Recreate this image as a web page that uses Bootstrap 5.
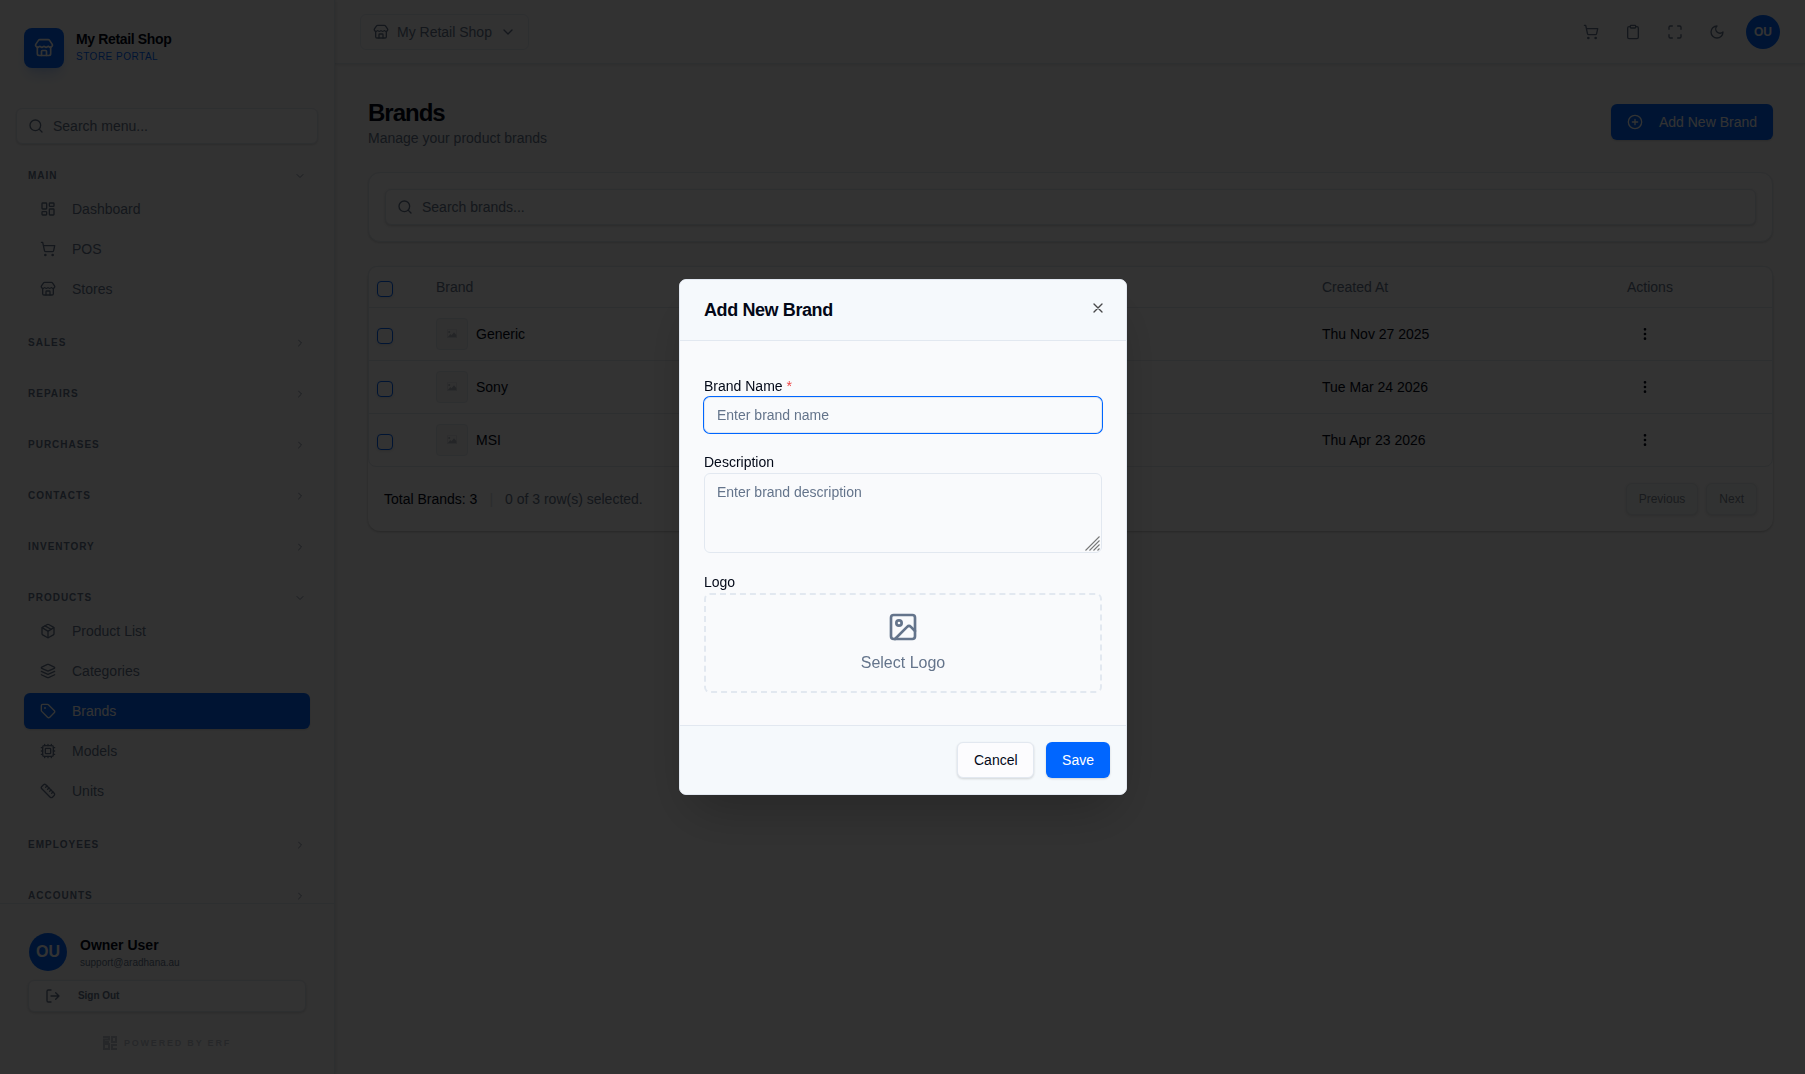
<!DOCTYPE html>
<html lang="en">
<head>
<meta charset="utf-8">
<meta name="viewport" content="width=device-width, initial-scale=1">
<title>Brands - My Retail Shop</title>
<link href="https://cdn.jsdelivr.net/npm/bootstrap@5.3.0/dist/css/bootstrap.min.css" rel="stylesheet">
<style>
:root{--brand:#0066ff;--line:#e2e8f0;--ink:#020817;--soft:#64748b}
body{font-family:"Liberation Sans",Arial,sans-serif;font-size:14px;line-height:20px;color:var(--ink);background:#fafafa;height:1074px;overflow:hidden}
.ico{width:16px;height:16px;fill:none;stroke:currentColor;stroke-width:2;stroke-linecap:round;stroke-linejoin:round;flex:none;display:block}
.soft{color:var(--soft)}
.blue{background:var(--brand);color:#fff}
.lift{box-shadow:0 1px 2px rgba(0,0,0,.08),0 1px 3px rgba(0,0,0,.08)}
.side{width:335px;flex:none;background:#fbfbfb;border-right:1px solid var(--line);box-shadow:1px 0 3px rgba(0,0,0,.1);height:1074px;z-index:2}
.side-brand{padding-top:28px;gap:12px}
.side-search{margin-top:40px}
.logo-tile{width:40px;height:40px;border-radius:8px;box-shadow:0 10px 15px -3px rgba(0,102,255,.2),0 4px 6px -4px rgba(0,102,255,.2)}
.logo-tile .ico{width:20px;height:20px}
.shop-name{font-size:14px;line-height:20px;font-weight:700;letter-spacing:-.35px}
.portal{font-size:10px;line-height:15px;color:var(--brand);letter-spacing:.5px}
.field{height:36px;border:1px solid var(--line);border-radius:6px;background:#fcfcfc;padding:0 11px;gap:9px;color:var(--soft)}
.menu{padding:16px 24px 0;gap:20px;overflow:hidden;flex:1 1 0;min-height:0}
.menu section{flex:none}
.menu-head{height:31px;font-size:10px;font-weight:700;letter-spacing:1px;color:var(--soft);padding:0 4px}
.menu-head .ico{width:12px;height:12px;opacity:.75}
.menu-item{height:36px;border-radius:6px;padding:0 16px;gap:16px;color:var(--soft);text-decoration:none}
.menu-item.on{background:var(--brand);color:#fff}
.side-foot{height:171px;border-top:1px solid var(--line);padding:16px 16px 0}
.user-box{background:#f8f8f8;border-radius:12px;padding:12px}
.disc{border-radius:50%;font-weight:700}
.disc-lg{width:38px;height:38px;font-size:16px;margin:1px}
.disc-sm{width:34px;height:34px;font-size:12px;margin-left:-5px}
.mail{font-size:10px;line-height:15px}
.signout{height:32px;border:1px solid var(--line);border-radius:6px;font-size:10px;font-weight:700;padding:0 16px;gap:17px;background:#fcfcfc;letter-spacing:-.05px}
.powered{font-size:9px;font-weight:700;letter-spacing:1.8px;color:var(--soft);opacity:.4;gap:7px;margin-top:9px}
.powered svg{width:14px;height:14px}
.top{height:64px;border-bottom:1px solid var(--line);box-shadow:0 1px 3px rgba(0,0,0,.1);padding:0 25px;background:#fafafa}
.top-tools{gap:26px}
.shop-pick{height:36px;border:1px solid var(--line);border-radius:6px;padding:0 12px;gap:8px}
.page{padding:32px 32px 0 33px}
.page-head{height:52px}
h1{font-size:24px;line-height:32px;font-weight:700;letter-spacing:-1px;padding-top:1px;height:32px}
.main-btn{height:36px;border-radius:6px;padding:0 16px;gap:16px;border:0}
.panel{background:#fcfcfc;border-radius:12px;border:1px solid var(--line)}
.grid-box{border-radius:12px;background:#fcfcfc;box-shadow:0 1px 3px rgba(0,0,0,.15),0 1px 2px rgba(0,0,0,.1)}
.grid-wrap{border:1px solid var(--line);border-radius:8px;height:201px;overflow:hidden}
.grid-wrap table{table-layout:fixed;width:100%;margin:0;border-collapse:separate;border-spacing:0}
.col-tick{width:59px}.col-date{width:305px}.col-act{width:153px}
.grid-wrap th{height:41px;font-weight:400;color:var(--soft);border-bottom:1px solid var(--line);padding:0 8px}
.grid-wrap td{height:53px;border-bottom:1px solid var(--line);padding:0 8px;vertical-align:middle}
.grid-wrap tr:last-child td{border-bottom:0;height:52px}
.tick{width:16px;height:16px;border:1px solid var(--brand);border-radius:4px;display:block;box-shadow:0 1px 2px rgba(0,0,0,.1);margin-top:4px}
.thumb{width:32px;height:32px;border:1px solid var(--line);border-radius:4px;background:#f4f4f4}
.thumb svg{width:12px;height:12px;fill:#b4bac3}
.kebab{margin-left:10px}
.bar{margin:0 12px}
.pg{height:32px;font-size:12px;border:1px solid #dbe4e8;border-radius:6px;padding:0 12px;background:#f2f9f5;opacity:.7;color:#475569}
.modal{padding-left:1px}
.modal-backdrop{opacity:.8;width:100%;height:100%}
.modal-dialog{max-width:448px;margin-top:0;margin-bottom:0;min-height:1074px}
.modal-content{border:1px solid var(--line);border-radius:7px;background:#f9fafc;box-shadow:0 25px 50px -12px rgba(0,0,0,.25);overflow:hidden;color:var(--ink)}
.modal-header{height:61px;padding:0 20px 0 24px;background:#f5f9fc;border-bottom:1px solid var(--line);border-radius:0}
.modal-title{font-size:18px;line-height:28px;font-weight:700;letter-spacing:-.4px}
.modal-body{padding:36px 24px 32px;gap:20px}
.modal-body label{line-height:18px;height:20px;display:block}
.form-control{font-size:14px;line-height:20px;border-color:var(--line);border-radius:6px;background:#f9fafc;padding:7px 12px}
.form-control::placeholder{color:var(--soft)}
.name-in{height:36px;box-shadow:0 0 0 1px var(--brand)}
.desc-in{height:80px;min-height:80px;display:block;resize:none;padding-top:8px}
.grip{position:absolute;right:2px;bottom:2px;width:15px;height:15px;stroke:#777;stroke-width:1.1;fill:none}
.drop{height:100px;border:2px dashed var(--line);border-radius:6px;font-size:16px;line-height:24px;gap:8px;padding-top:1px}
.drop .ico{width:32px;height:32px;margin-top:-1px}
.modal-footer{height:69px;padding:0 16px;gap:12px;background:#f5f9fc;border-top:1px solid var(--line);border-radius:0}
.modal-footer .btn{height:36px;font-size:14px;line-height:20px;border-radius:6px;padding:0 15px;margin:0}
.modal-footer .btn-cancel{border:1px solid var(--line);background:#fcfcfe;color:var(--ink);padding:0 15.5px}
.close-x{background:none;border:0;padding:0;opacity:.7;margin-top:-4px}
.star{color:#ef4444}
</style>
</head>
<body>
<svg class="d-none">
<symbol id="store" viewBox="0 0 24 24"><path d="M15 21v-5a1 1 0 0 0-1-1h-4a1 1 0 0 0-1 1v5"/><path d="M17.774 10.31a1.12 1.12 0 0 0-1.549 0 2.5 2.5 0 0 1-3.451 0 1.12 1.12 0 0 0-1.548 0 2.5 2.5 0 0 1-3.452 0 1.12 1.12 0 0 0-1.549 0 2.5 2.5 0 0 1-3.77-3.248l2.889-4.184A2 2 0 0 1 7 2h10a2 2 0 0 1 1.653.873l2.895 4.192a2.5 2.5 0 0 1-3.774 3.244"/><path d="M4 10.95V19a2 2 0 0 0 2 2h12a2 2 0 0 0 2-2v-8.05"/></symbol>
<symbol id="search" viewBox="0 0 24 24"><circle cx="11" cy="11" r="8"/><path d="m21 21-4.3-4.3"/></symbol>
<symbol id="down" viewBox="0 0 24 24"><path d="m6 9 6 6 6-6"/></symbol>
<symbol id="right" viewBox="0 0 24 24"><path d="m9 18 6-6-6-6"/></symbol>
<symbol id="dash" viewBox="0 0 24 24"><rect width="7" height="9" x="3" y="3" rx="1"/><rect width="7" height="5" x="14" y="3" rx="1"/><rect width="7" height="9" x="14" y="12" rx="1"/><rect width="7" height="5" x="3" y="16" rx="1"/></symbol>
<symbol id="cart" viewBox="0 0 24 24"><circle cx="8" cy="21" r="1"/><circle cx="19" cy="21" r="1"/><path d="M2.05 2.05h2l2.66 12.42a2 2 0 0 0 2 1.58h9.78a2 2 0 0 0 1.95-1.57l1.65-7.43H5.12"/></symbol>
<symbol id="pack" viewBox="0 0 24 24"><path d="M11 21.73a2 2 0 0 0 2 0l7-4A2 2 0 0 0 21 16V8a2 2 0 0 0-1-1.73l-7-4a2 2 0 0 0-2 0l-7 4A2 2 0 0 0 3 8v8a2 2 0 0 0 1 1.73z"/><path d="M12 22V12"/><path d="m3.3 7 7.703 4.734a2 2 0 0 0 1.994 0L20.7 7"/><path d="m7.5 4.27 9 5.15"/></symbol>
<symbol id="layers" viewBox="0 0 24 24"><path d="M12.83 2.18a2 2 0 0 0-1.66 0L2.6 6.08a1 1 0 0 0 0 1.83l8.58 3.91a2 2 0 0 0 1.66 0l8.58-3.9a1 1 0 0 0 0-1.83Z"/><path d="m22 17.65-9.17 4.16a2 2 0 0 1-1.66 0L2 17.65"/><path d="m22 12.65-9.17 4.16a2 2 0 0 1-1.66 0L2 12.65"/></symbol>
<symbol id="tag" viewBox="0 0 24 24"><path d="M12.586 2.586A2 2 0 0 0 11.172 2H4a2 2 0 0 0-2 2v7.172a2 2 0 0 0 .586 1.414l8.704 8.704a2.426 2.426 0 0 0 3.42 0l6.58-6.58a2.426 2.426 0 0 0 0-3.42z"/><circle cx="7.5" cy="7.5" r=".5" fill="currentColor"/></symbol>
<symbol id="cpu" viewBox="0 0 24 24"><rect width="16" height="16" x="4" y="4" rx="2"/><rect width="8" height="8" x="8" y="8" rx="1"/><path d="M12 20v2M12 2v2M17 20v2M17 2v2M2 12h2M2 17h2M2 7h2M20 12h2M20 17h2M20 7h2M7 20v2M7 2v2"/></symbol>
<symbol id="ruler" viewBox="0 0 24 24"><path d="M21.3 15.3a2.4 2.4 0 0 1 0 3.4l-2.6 2.6a2.4 2.4 0 0 1-3.4 0L2.7 8.7a2.41 2.41 0 0 1 0-3.4l2.6-2.6a2.41 2.41 0 0 1 3.4 0Z"/><path d="m14.5 12.5 2-2M11.5 9.5l2-2M8.5 6.5l2-2M17.5 15.5l2-2"/></symbol>
<symbol id="out" viewBox="0 0 24 24"><path d="M9 21H5a2 2 0 0 1-2-2V5a2 2 0 0 1 2-2h4M16 17l5-5-5-5M21 12H9"/></symbol>
<symbol id="clip" viewBox="0 0 24 24"><rect width="8" height="4" x="8" y="2" rx="1"/><path d="M16 4h2a2 2 0 0 1 2 2v14a2 2 0 0 1-2 2H6a2 2 0 0 1-2-2V6a2 2 0 0 1 2-2h2"/></symbol>
<symbol id="full" viewBox="0 0 24 24"><path d="M8 3H5a2 2 0 0 0-2 2v3M21 8V5a2 2 0 0 0-2-2h-3M3 16v3a2 2 0 0 0 2 2h3M16 21h3a2 2 0 0 0 2-2v-3"/></symbol>
<symbol id="moon" viewBox="0 0 24 24"><path d="M12 3a6 6 0 0 0 9 9 9 9 0 1 1-9-9Z"/></symbol>
<symbol id="plus" viewBox="0 0 24 24"><circle cx="12" cy="12" r="10"/><path d="M8 12h8M12 8v8"/></symbol>
<symbol id="dots" viewBox="0 0 24 24"><circle cx="12" cy="12" r="1"/><circle cx="12" cy="5" r="1"/><circle cx="12" cy="19" r="1"/></symbol>
<symbol id="pic" viewBox="0 0 24 24"><rect width="18" height="18" x="3" y="3" rx="2"/><circle cx="9" cy="9" r="2"/><path d="m21 15-3.086-3.086a2 2 0 0 0-2.828 0L6 21"/></symbol>
<symbol id="x" viewBox="0 0 24 24"><path d="M18 6 6 18M6 6l12 12"/></symbol>
<symbol id="photo" viewBox="0 0 12 12"><path fill-rule="evenodd" d="M1 1.5h10v8.5H1zM1.6 2.1v7.3h8.8V2.1z" opacity=".5"/><circle cx="3.2" cy="4" r="1"/><path d="M1.6 9.2 4.3 6l1.2 1.2L8 4.3l2.4 2.6v2.3z"/></symbol>
</svg>

<div class="d-flex">
<aside class="side d-flex flex-column">
  <div class="side-brand d-flex align-items-center px-4">
    <div class="logo-tile blue d-flex align-items-center justify-content-center"><svg class="ico"><use href="#store"/></svg></div>
    <div class="pb-1"><div class="shop-name">My Retail Shop</div><div class="portal">STORE PORTAL</div></div>
  </div>
  <div class="side-search field lift d-flex align-items-center mx-3"><svg class="ico"><use href="#search"/></svg>Search menu...</div>
  <nav class="menu d-flex flex-column">
    <section>
      <div class="menu-head d-flex align-items-center justify-content-between">MAIN<svg class="ico"><use href="#down"/></svg></div>
      <div class="d-flex flex-column gap-1">
        <a class="menu-item d-flex align-items-center"><svg class="ico"><use href="#dash"/></svg>Dashboard</a>
        <a class="menu-item d-flex align-items-center"><svg class="ico"><use href="#cart"/></svg>POS</a>
        <a class="menu-item d-flex align-items-center"><svg class="ico"><use href="#store"/></svg>Stores</a>
      </div>
    </section>
    <section class="menu-head d-flex align-items-center justify-content-between">SALES<svg class="ico"><use href="#right"/></svg></section>
    <section class="menu-head d-flex align-items-center justify-content-between">REPAIRS<svg class="ico"><use href="#right"/></svg></section>
    <section class="menu-head d-flex align-items-center justify-content-between">PURCHASES<svg class="ico"><use href="#right"/></svg></section>
    <section class="menu-head d-flex align-items-center justify-content-between">CONTACTS<svg class="ico"><use href="#right"/></svg></section>
    <section class="menu-head d-flex align-items-center justify-content-between">INVENTORY<svg class="ico"><use href="#right"/></svg></section>
    <section>
      <div class="menu-head d-flex align-items-center justify-content-between">PRODUCTS<svg class="ico"><use href="#down"/></svg></div>
      <div class="d-flex flex-column gap-1">
        <a class="menu-item d-flex align-items-center"><svg class="ico"><use href="#pack"/></svg>Product List</a>
        <a class="menu-item d-flex align-items-center"><svg class="ico"><use href="#layers"/></svg>Categories</a>
        <a class="menu-item on lift d-flex align-items-center"><svg class="ico"><use href="#tag"/></svg>Brands</a>
        <a class="menu-item d-flex align-items-center"><svg class="ico"><use href="#cpu"/></svg>Models</a>
        <a class="menu-item d-flex align-items-center"><svg class="ico"><use href="#ruler"/></svg>Units</a>
      </div>
    </section>
    <section class="menu-head d-flex align-items-center justify-content-between">EMPLOYEES<svg class="ico"><use href="#right"/></svg></section>
    <section class="menu-head d-flex align-items-center justify-content-between">ACCOUNTS<svg class="ico"><use href="#right"/></svg></section>
  </nav>
  <div class="side-foot flex-shrink-0">
    <div class="user-box">
      <div class="d-flex align-items-center mb-2" style="gap:12px">
        <div class="disc disc-lg blue d-flex align-items-center justify-content-center">OU</div>
        <div><div class="fw-bold">Owner User</div><div class="mail soft">support@aradhana.au</div></div>
      </div>
      <div class="signout lift soft d-flex align-items-center"><svg class="ico"><use href="#out"/></svg>Sign Out</div>
    </div>
    <div class="powered d-flex align-items-center justify-content-center">
      <svg viewBox="0 0 14 14" fill="none" stroke="currentColor" stroke-width="2"><path d="M0 1h6v2.5H1V6h5M8 1h5v5H9V1M1 8h5v5H1zM14 9H9v4h5"/></svg>POWERED BY ERF</div>
  </div>
</aside>

<div class="flex-grow-1">
  <header class="top d-flex align-items-center justify-content-between">
    <div class="shop-pick soft d-flex align-items-center"><svg class="ico"><use href="#store"/></svg>My Retail Shop<svg class="ico"><use href="#down"/></svg></div>
    <div class="top-tools d-flex align-items-center soft">
      <svg class="ico"><use href="#cart"/></svg><svg class="ico"><use href="#clip"/></svg><svg class="ico"><use href="#full"/></svg><svg class="ico"><use href="#moon"/></svg>
      <div class="disc disc-sm blue d-flex align-items-center justify-content-center">OU</div>
    </div>
  </header>
  <main class="page">
    <div class="page-head d-flex align-items-center justify-content-between">
      <div><h1 class="mb-0">Brands</h1><div class="soft">Manage your product brands</div></div>
      <button class="main-btn blue lift d-flex align-items-center"><svg class="ico"><use href="#plus"/></svg>Add New Brand</button>
    </div>
    <div class="panel lift p-3 mt-4"><div class="field lift d-flex align-items-center"><svg class="ico"><use href="#search"/></svg>Search brands...</div></div>
    <div class="grid-box mt-4">
      <div class="grid-wrap">
        <table>
          <colgroup><col class="col-tick"><col><col class="col-date"><col class="col-act"></colgroup>
          <thead><tr><th><span class="tick"></span></th><th>Brand</th><th>Created At</th><th>Actions</th></tr></thead>
          <tbody>
            <tr><td><span class="tick"></span></td><td><div class="d-flex align-items-center gap-2"><span class="thumb d-flex align-items-center justify-content-center"><svg><use href="#photo"/></svg></span>Generic</div></td><td>Thu Nov 27 2025</td><td><svg class="ico kebab"><use href="#dots"/></svg></td></tr>
            <tr><td><span class="tick"></span></td><td><div class="d-flex align-items-center gap-2"><span class="thumb d-flex align-items-center justify-content-center"><svg><use href="#photo"/></svg></span>Sony</div></td><td>Tue Mar 24 2026</td><td><svg class="ico kebab"><use href="#dots"/></svg></td></tr>
            <tr><td><span class="tick"></span></td><td><div class="d-flex align-items-center gap-2"><span class="thumb d-flex align-items-center justify-content-center"><svg><use href="#photo"/></svg></span>MSI</div></td><td>Thu Apr 23 2026</td><td><svg class="ico kebab"><use href="#dots"/></svg></td></tr>
          </tbody>
        </table>
      </div>
      <div class="d-flex align-items-center justify-content-between p-3">
        <div class="d-flex align-items-center"><span>Total Brands: 3</span><span class="bar soft opacity-25">|</span><span class="soft">0 of 3 row(s) selected.</span></div>
        <div class="d-flex gap-2"><button class="pg lift">Previous</button><button class="pg lift">Next</button></div>
      </div>
    </div>
  </main>
</div>
</div>

<div class="modal-backdrop"></div>
<div class="modal d-block overflow-hidden" tabindex="-1" role="dialog">
  <div class="modal-dialog modal-dialog-centered">
    <div class="modal-content">
      <div class="modal-header d-flex align-items-center justify-content-between"><h2 class="modal-title">Add New Brand</h2><button class="close-x" aria-label="Close"><svg class="ico"><use href="#x"/></svg></button></div>
      <div class="modal-body d-flex flex-column">
        <div><label>Brand Name <span class="star">*</span></label><input class="form-control name-in" placeholder="Enter brand name"></div>
        <div><label>Description</label><div class="position-relative"><textarea class="form-control desc-in" placeholder="Enter brand description"></textarea><svg class="grip" viewBox="0 0 15 15"><path d="M.5 14.5l14-14M4.5 14.5l10-10M8.5 14.5l6-6M12.5 14.5l2-2"/></svg></div></div>
        <div><label>Logo</label><div class="drop soft d-flex flex-column align-items-center justify-content-center"><svg class="ico"><use href="#pic"/></svg>Select Logo</div></div>
      </div>
      <div class="modal-footer"><button class="btn btn-cancel lift">Cancel</button><button class="btn blue lift">Save</button></div>
    </div>
  </div>
</div>
<script src="https://cdn.jsdelivr.net/npm/bootstrap@5.3.0/dist/js/bootstrap.bundle.min.js"></script>
</body>
</html>
